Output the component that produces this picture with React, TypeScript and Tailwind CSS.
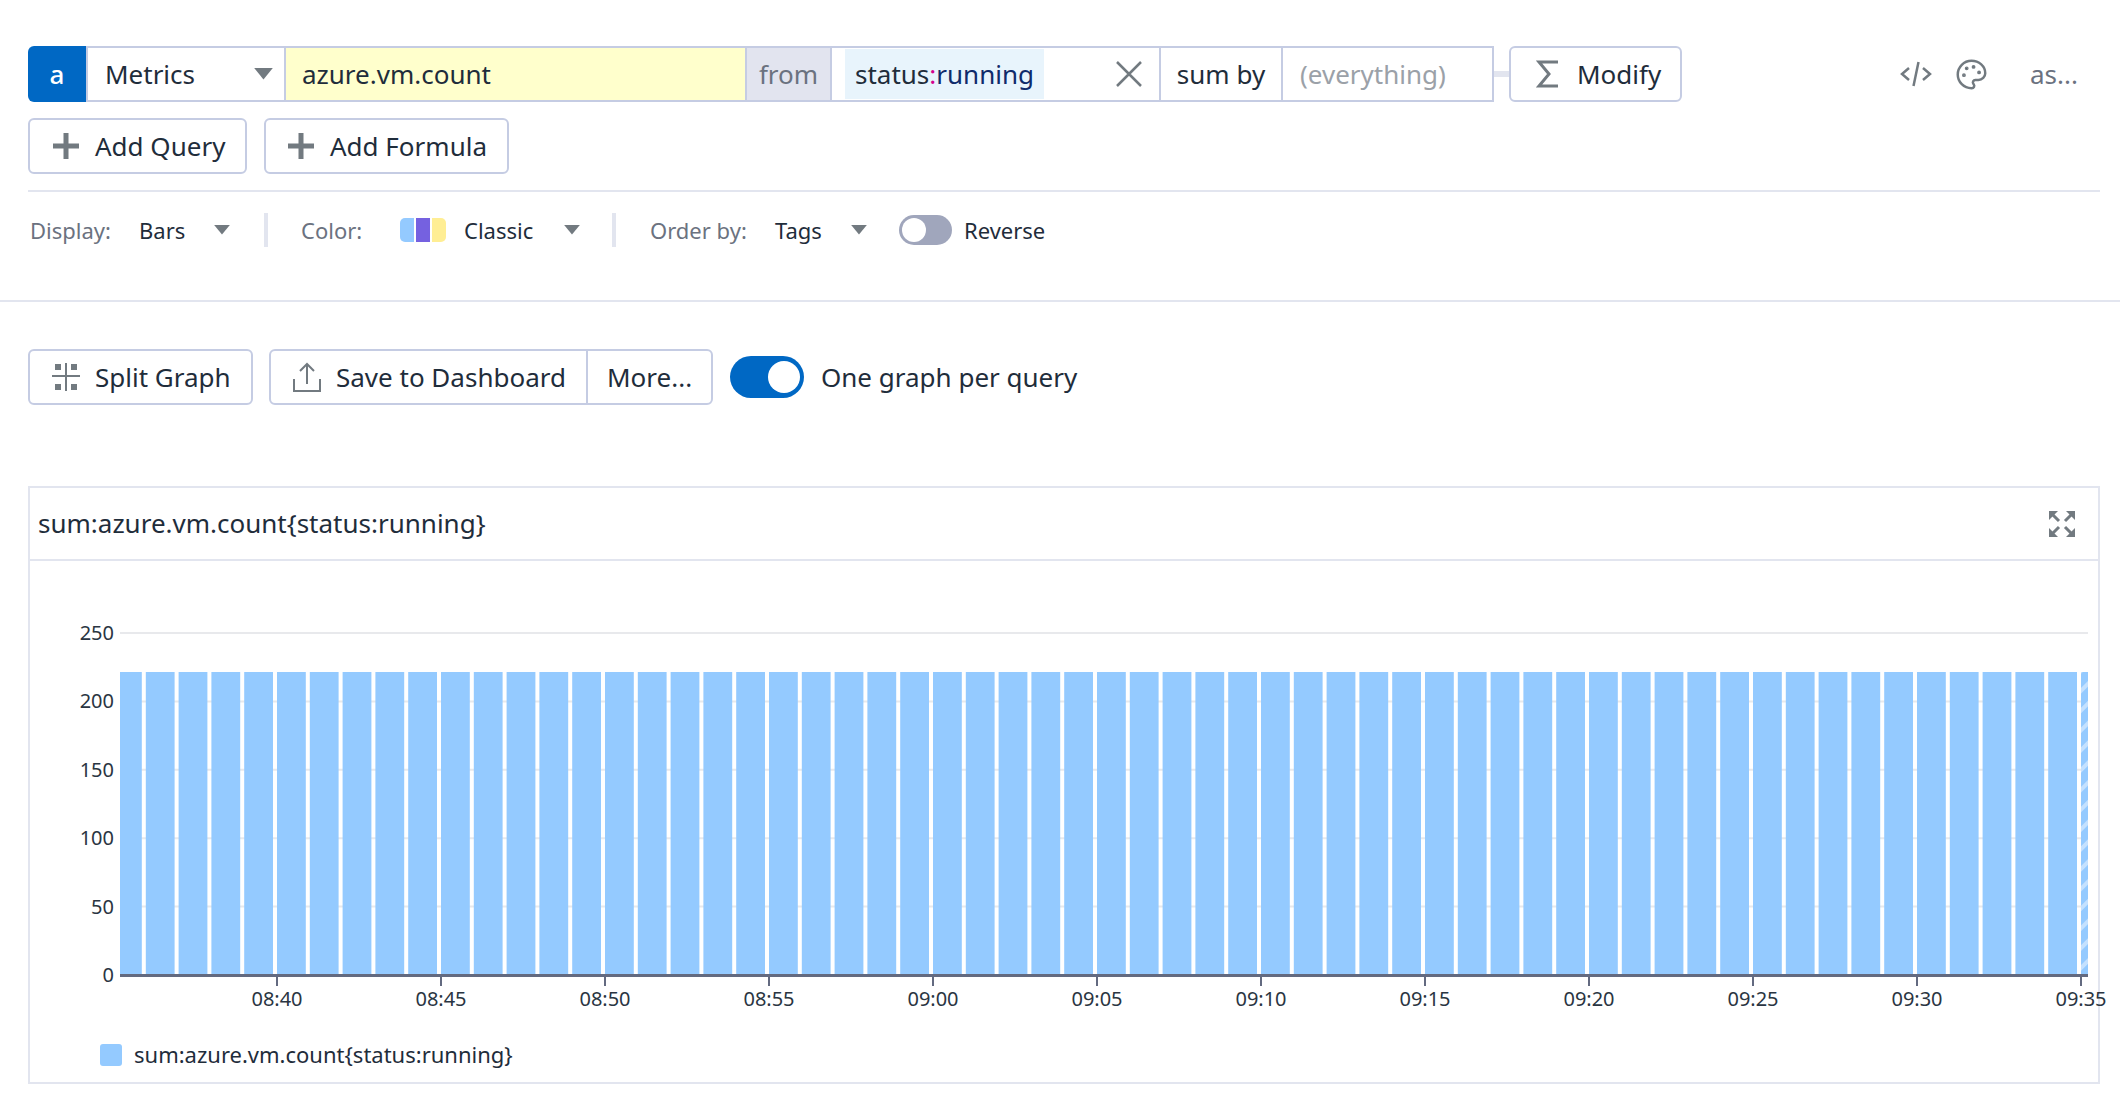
import React from 'react'
import { Palette } from 'lucide-react'

const Caret = ({ className = '', w = 16 }: { className?: string; w?: number }) => (
  <svg width={w} height={w * 0.6} viewBox="0 0 18 11" className={className}>
    <path d="M0 0h18L9 11z" fill="#727a80" />
  </svg>
)

const Plus = () => (
  <svg width="28" height="28" viewBox="0 0 28 28" className="block">
    <path d="M11.500 1h5v10.500H27v5H16.500V27h-5V16.500H1v-5h10.500z" fill="#727a80" />
  </svg>
)

const SplitIcon = () => (
  <svg width="28" height="28" viewBox="0 0 28 28" fill="#727a80" className="block">
    <rect x="3" y="1" width="6" height="6" />
    <rect x="19" y="1" width="6" height="6" />
    <rect x="3" y="21" width="6" height="6" />
    <rect x="19" y="21" width="6" height="6" />
    <rect x="0" y="12" width="28" height="2" />
    <rect x="13" y="0" width="2" height="28" />
  </svg>
)

const UploadIcon = () => (
  <svg width="28" height="30" viewBox="0 0 28 30" fill="none" stroke="#727a80" strokeWidth="2" className="block">
    <path d="M14 22V2M7 9l7-7 7 7" />
    <path d="M1 17v12h26V17" />
  </svg>
)

const ExpandIcon = () => (
  <svg width="26" height="26" viewBox="0 0 26 26" fill="#727a80" stroke="#727a80" className="block">
    <path d="M0 0h9L0 9z" strokeWidth="0" />
    <path d="M26 0h-9L26 9z" strokeWidth="0" />
    <path d="M0 26h9L0 17z" strokeWidth="0" />
    <path d="M26 26h-9L26 17z" strokeWidth="0" />
    <path d="M3 3l7 7M23 3l-7 7M3 23l7-7M23 23l-7-7" strokeWidth="3" fill="none" />
  </svg>
)

const btn = 'flex items-center border-2 border-[#c5cce3] rounded-[6px] bg-white'

const xLabels = ['08:40', '08:45', '08:50', '08:55', '09:00', '09:05', '09:10', '09:15', '09:20', '09:25', '09:30', '09:35']
const yLabels = [0, 50, 100, 150, 200, 250]

// plot coordinates are relative to the card's inner box
const Chart = () => {
  const left = 90
  const right = 2058
  const base = 414
  const top = 111
  const period = 32.8
  const lastStart = 2051
  const bars: number[] = []
  for (let i = 0; i < 59; i++) bars.push(lastStart - period * (59 - i))

  return (
    <svg width="2069" height="460" className="block overflow-visible" fontFamily="'Noto Sans', sans-serif">
      <defs>
        <pattern id="hatch" width="14" height="14" patternUnits="userSpaceOnUse" patternTransform="rotate(-45)">
          <rect width="14" height="14" fill="#94caff" />
          <rect width="14" height="4" fill="#c4e1ff" />
        </pattern>
      </defs>
      {yLabels.map((v) => {
        const y = base - v * 1.368
        return (
          <g key={v}>
            {v > 0 && <line x1={left} x2={right} y1={y} y2={y} stroke="#e8e9ec" strokeWidth="2" />}
            <text x={84} y={y + 7} textAnchor="end" fontSize="20" fill="#2a3542">{v}</text>
          </g>
        )
      })}
      <rect x={left} y={top} width={21.8} height={base - top} fill="#94caff" />
      {bars.map((x) => (
        <rect key={x} x={x} y={top} width={28.8} height={base - top} fill="#94caff" />
      ))}
      <rect x={lastStart} y={top} width={7} height={base - top} fill="url(#hatch)" />
      <rect x={left} y={base - 1} width={right - left} height={3} fill="#636a80" />
      {xLabels.map((t, i) => {
        const x = lastStart - period * 5 * (11 - i)
        return (
          <g key={t}>
            <rect x={x - 1} y={base} width={2} height={11} fill="#636a80" />
            <text x={x} y={base + 31} textAnchor="middle" fontSize="20" fill="#2a3542">{t}</text>
          </g>
        )
      })}
    </svg>
  )
}

export default function App() {
  return (
    <div className="w-[2120px] h-[1096px] bg-white overflow-hidden font-['Noto_Sans',sans-serif] text-[#1f2d3b]">
      <div className="pt-[46px]">
        <div className="flex items-center h-[56px] pl-[28px]">
          <div className="w-[58px] h-[56px] bg-[#0068c4] rounded-l-[6px] flex items-center justify-center text-white text-[26px] font-medium">a</div>
          <div className="flex h-[56px] border-y-2 border-r-2 border-l-2 border-[#c5cce3] text-[26px]">
            <div className="w-[198px] flex items-center justify-between pl-[17px] pr-[11px] border-r-2 border-[#c5cce3]">
              <span>Metrics</span>
              <Caret w={19} />
            </div>
            <div className="w-[461px] flex items-center pl-[16px] bg-[#ffffcc] border-r-2 border-[#c5cce3]">azure.vm.count</div>
            <div className="w-[85px] flex items-center justify-center bg-[#e2e4ef] text-[#6b7280] border-r-2 border-[#c5cce3]">from</div>
            <div className="w-[329px] flex items-center justify-between pl-[13px] pr-[17px] border-r-2 border-[#c5cce3]">
              <span className="h-[50px] w-[199px] bg-[#e8f4fc] flex items-center justify-center">
                <span>status</span><span className="text-[#d4008f]">:</span><span className="text-[#0f2b6b]">running</span>
              </span>
              <svg width="26" height="26" viewBox="0 0 26 26" stroke="#727a80" strokeWidth="2.500">
                <path d="M1 1l24 24M25 1L1 25" />
              </svg>
            </div>
            <div className="w-[122px] flex items-center justify-center border-r-2 border-[#c5cce3]">sum by</div>
            <div className="w-[209px] flex items-center pl-[17px] text-[#9ba1a8]">(everything)</div>
          </div>
          <div className="w-[15px] h-[6px] bg-[#e2e5ef]" />
          <div className={`${btn} h-[56px] w-[173px] text-[26px]`}>
            <svg width="22" height="28" viewBox="0 0 22 28" fill="none" stroke="#727a80" strokeWidth="3" className="ml-[25px] mr-[19px]">
              <path d="M22 2H3l10 12L3 26h19" />
            </svg>
            Modify
          </div>
          <div className="ml-[218px] flex items-center">
            <svg width="32" height="26" viewBox="0 0 32 26" fill="none" stroke="#727a80" strokeWidth="2.500">
              <path d="M9 7l-7 6 7 6M23 7l7 6-7 6" />
              <path d="M18.500 1l-5 24" />
            </svg>
            <Palette className="ml-[23px]" size={33} color="#727a80" strokeWidth={1.8} />
            <span className="ml-[42px] text-[26px] text-[#6b7280]">as...</span>
          </div>
        </div>

        <div className="flex gap-[17px] pl-[28px] mt-[16px]">
          <div className={`${btn} h-[56px] w-[219px] text-[26px]`}>
            <span className="ml-[22px] mr-[15px]"><Plus /></span>
            Add Query
          </div>
          <div className={`${btn} h-[56px] w-[245px] text-[26px]`}>
            <span className="ml-[21px] mr-[15px]"><Plus /></span>
            Add Formula
          </div>
        </div>

        <div className="h-[2px] w-[2072px] ml-[28px] mt-[16px] bg-[#e2e5ef]" />

        <div className="flex items-center h-[76px] pl-[30px] text-[22px]">
          <span className="text-[#6b7280] w-[109px]">Display:</span>
          <span className="w-[75px]">Bars</span>
          <Caret />
          <div className="ml-[34px] w-[4px] h-[34px] bg-[#e2e5ef]" />
          <span className="ml-[33px] text-[#6b7280] w-[99px]">Color:</span>
          <div className="flex gap-[2px] w-[46px] h-[24px] rounded-[5px] overflow-hidden">
            <div className="w-[14px] bg-[#94caff]" />
            <div className="w-[14px] bg-[#7561e0]" />
            <div className="w-[14px] bg-[#ffee94]" />
          </div>
          <span className="ml-[18px] w-[100px]">Classic</span>
          <Caret />
          <div className="ml-[32px] w-[4px] h-[34px] bg-[#e2e5ef]" />
          <span className="ml-[34px] text-[#6b7280] w-[125px]">Order by:</span>
          <span className="w-[76px]">Tags</span>
          <Caret />
          <div className="ml-[32px] w-[53px] h-[30px] rounded-full bg-[#a0a6bc] relative">
            <div className="absolute left-[3px] top-[3px] w-[24px] h-[24px] rounded-full bg-white" />
          </div>
          <span className="ml-[12px]">Reverse</span>
        </div>

        <div className="h-[2px] w-full mt-[32px] bg-[#e2e5ef]" />

        <div className="flex items-center pl-[28px] mt-[47px]">
          <div className={`${btn} h-[56px] w-[225px] text-[26px] mr-[16px]`}>
            <span className="ml-[22px] mr-[15px]"><SplitIcon /></span>
            Split Graph
          </div>
          <div className={`${btn} h-[56px] w-[444px] text-[26px] mr-[17px]`}>
            <span className="ml-[22px] mr-[15px]"><UploadIcon /></span>
            <span className="w-[250px]">Save to Dashboard</span>
            <div className="h-full w-[2px] bg-[#c5cce3]" />
            <span className="ml-[19px]">More...</span>
          </div>
          <div className="w-[74px] h-[42px] rounded-full bg-[#0068c4] relative">
            <div className="absolute right-[4px] top-[5px] w-[32px] h-[32px] rounded-full bg-white" />
          </div>
          <span className="text-[26px] ml-[17px]">One graph per query</span>
        </div>

        <div className="ml-[28px] mt-[81px] w-[2072px] h-[598px] border-2 border-[#e2e5ef]">
          <div className="h-[73px] flex items-center justify-between pl-[8px] pr-[23px] border-b-2 border-[#e2e5ef] text-[26px]">
            <span>sum:azure.vm.count{'{'}status:running{'}'}</span>
            <ExpandIcon />
          </div>
          <Chart />
          <div className="flex items-center pl-[70px] mt-[17px] text-[22px]">
            <div className="w-[22px] h-[22px] rounded-[3px] bg-[#94caff] mr-[12px]" />
            <span>sum:azure.vm.count{'{'}status:running{'}'}</span>
          </div>
        </div>
      </div>
    </div>
  )
}
